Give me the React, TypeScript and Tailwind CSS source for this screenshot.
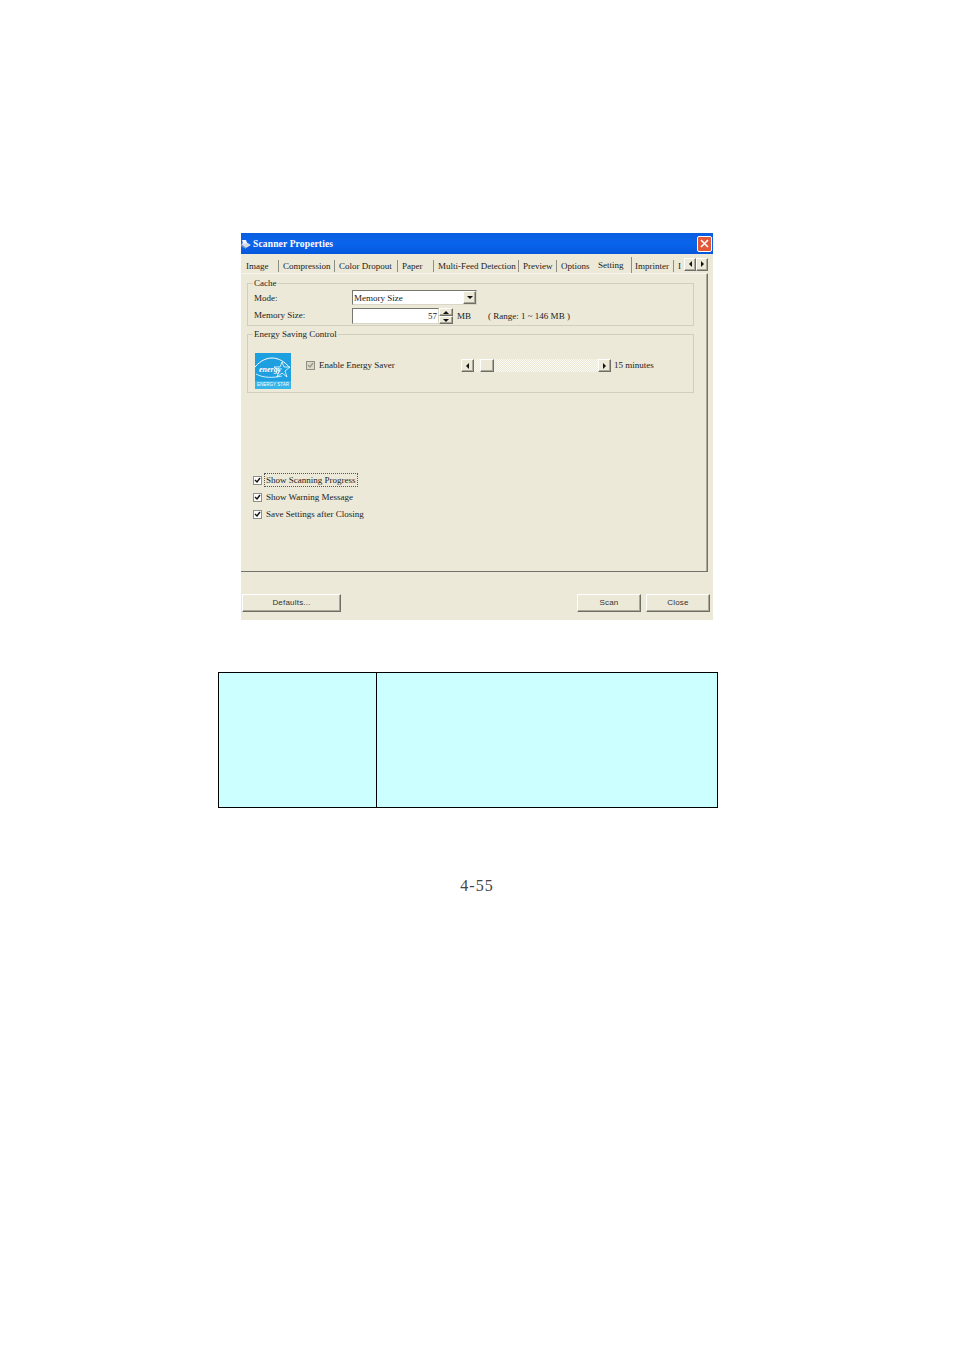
import React from 'react';

const ui = 'font-["Liberation_Serif",serif] text-[9px] leading-[12px] text-[#222] whitespace-nowrap';

function RaisedBox({ className, children }: { className: string; children?: React.ReactNode }) {
  return (
    <div className={`flex items-center justify-center bg-[#ece9d8] border border-t-white border-l-white border-r-[#6f6e64] border-b-[#6f6e64] shadow-[inset_-1px_-1px_0_#aca899] ${className}`}>
      {children}
    </div>
  );
}

function Arrow({ dir }: { dir: 'left' | 'right' | 'up' | 'down' }) {
  const pts = { left: '4,0 4,6 1,3', right: '1,0 1,6 4,3', up: '0,4 6,4 3,1', down: '0,1 6,1 3,4' }[dir];
  const box = dir === 'left' || dir === 'right' ? '0 0 5 6' : '0 0 6 5';
  const size = dir === 'left' || dir === 'right' ? 'w-[5px] h-[6px]' : 'w-[6px] h-[5px]';
  return (
    <svg viewBox={box} className={size}>
      <polygon points={pts} fill="#111" />
    </svg>
  );
}

function Check({ disabled }: { disabled?: boolean }) {
  return (
    <div className={`w-[9px] h-[9px] shrink-0 border border-[#8f8f84] ${disabled ? 'bg-[#dcd9c8]' : 'bg-white'}`}>
      <svg viewBox="0 0 7 7" className="w-[7px] h-[7px]">
        <path d="M1 3 L3 5 L6 1" fill="none" stroke={disabled ? '#9c9a8c' : '#111'} strokeWidth="1.4" />
      </svg>
    </div>
  );
}

function EnergyLogo() {
  return (
    <div className="w-[36px] h-[36px] bg-[#1d9fe0] flex flex-col">
      <svg viewBox="0 0 36 27" className="w-[36px] h-[27px]">
        <path d="M0 14 C6 7 12 5 17 5 C24 5 30 9 35 15" fill="none" stroke="#fff" strokeWidth="1" />
        <path d="M1 21 C8 25 18 25 27 23" fill="none" stroke="#fff" strokeWidth="0.8" />
        <path d="M27 9 L29 14 L35 14 L30 18 L32 24 L27 20 L22 24 L24 18 L19 14 L25 14 Z" fill="#1d9fe0" stroke="#fff" strokeWidth="0.8" />
        <text x="4" y="19" fontFamily="Liberation Serif, serif" fontStyle="italic" fontWeight="700" fontSize="8" fill="#fff">energy</text>
      </svg>
      <div className="flex-1 mt-[1px] bg-[#37b4ea] flex items-center justify-center font-['Liberation_Sans',sans-serif] text-[4.5px] leading-[6px] text-white whitespace-nowrap">
        ENERGY STAR
      </div>
    </div>
  );
}

const tabs = [
  { label: 'Image', w: 'w-[38px]', pl: 'pl-[5px]', sep: 'border-r' },
  { label: 'Compression', w: 'w-[56px]', pl: 'pl-[4px]', sep: 'border-r' },
  { label: 'Color Dropout', w: 'w-[63px]', pl: 'pl-[4px]', sep: 'border-r' },
  { label: 'Paper', w: 'w-[36px]', pl: 'pl-[4px]', sep: 'border-r' },
  { label: 'Multi-Feed Detection', w: 'w-[85px]', pl: 'pl-[4px]', sep: 'border-r' },
  { label: 'Preview', w: 'w-[38px]', pl: 'pl-[4px]', sep: 'border-r' },
  { label: 'Options', w: 'w-[35px]', pl: 'pl-[4px]', sep: '' },
];

const options = ['Show Scanning Progress', 'Show Warning Message', 'Save Settings after Closing'];

export default function App() {
  return (
    <div className="w-[954px] h-[1350px] bg-white flex flex-col overflow-hidden">
      {/* dialog screenshot */}
      <div className={`ml-[241px] mt-[233px] w-[472px] h-[387px] bg-[#ece9d8] flex flex-col ${ui}`}>
        <div className="h-[21px] shrink-0 flex items-center bg-gradient-to-b from-[#0a5ee0] via-[#0a64ec] to-[#0557dc]">
          <svg viewBox="0 0 10 10" className="w-[10px] h-[10px]">
            <path d="M0 5 L5 3 L10 6 L5 9 Z" fill="#d5dce8" />
            <path d="M0 5 L5 9 L5 10 L0 7 Z" fill="#8b9ab5" />
            <path d="M1 1 L5 1 L6 4 L2 5 Z" fill="#f2f5fa" />
          </svg>
          <span className="ml-[2px] text-white font-bold text-[9.5px] tracking-[0.15px]">Scanner Properties</span>
          <div className="ml-auto mr-[1px] w-[15px] h-[16px] flex items-center justify-center rounded-[2px] border border-white bg-[#e2593a]">
            <svg viewBox="0 0 9 9" className="w-[9px] h-[9px]">
              <path d="M1 1 L8 8 M8 1 L1 8" stroke="#fff" strokeWidth="1.6" />
            </svg>
          </div>
        </div>

        <div className="h-[19px] shrink-0 flex items-center">
          {tabs.map((t) => (
            <div key={t.label} className={`${t.w} ${t.pl} ${t.sep} h-[12px] mt-[5px] shrink-0 flex items-center border-[#8f8e82]`}>
              {t.label}
            </div>
          ))}
          <div className="w-[40px] pl-[6px] h-[16px] mt-[2px] flex items-center shrink-0 border-r border-[#8f8e82]">Setting</div>
          <div className="w-[42px] pl-[3px] h-[12px] mt-[5px] shrink-0 flex items-center border-r border-[#8f8e82]">Imprinter</div>
          <div className="w-[10px] pl-[4px] h-[12px] mt-[5px] shrink-0 flex items-center overflow-hidden">I</div>
          <RaisedBox className="w-[12px] h-[13px] mt-[1px]"><Arrow dir="left" /></RaisedBox>
          <RaisedBox className="w-[12px] h-[13px] mt-[1px]"><Arrow dir="right" /></RaisedBox>
        </div>

        <div className="w-[467px] h-[299px] shrink-0 flex flex-col border-t border-r border-b border-t-[#f7f5ec] border-r-[#74736a] border-b-[#74736a] pl-[6px] pt-[9px] shadow-[inset_-1px_0_0_#aca899]">
          <fieldset className="w-[447px] h-[43px] shrink-0 relative border border-[#d0cfbd] pl-[6px] pt-[6px]">
            <span className="absolute left-[5px] top-[-7px] bg-[#ece9d8] px-[1px]">Cache</span>
            <div className="flex items-center h-[15px]">
              <span className="w-[98px]">Mode:</span>
              <div className="w-[125px] h-[15px] flex items-center justify-between bg-white border border-t-[#77766c] border-l-[#77766c] border-r-[#d8d6c6] border-b-[#d8d6c6] pl-[1px]">
                <span>Memory Size</span>
                <RaisedBox className="w-[13px] h-[13px]"><Arrow dir="down" /></RaisedBox>
              </div>
            </div>
            <div className="flex items-center h-[16px] mt-[3px]">
              <span className="w-[98px] mt-[-2px]">Memory Size:</span>
              <div className="w-[87px] h-[16px] flex items-center justify-end bg-white border border-t-[#77766c] border-l-[#77766c] border-r-[#d8d6c6] border-b-[#d8d6c6] pr-[1px]">57</div>
              <div className="w-[14px] h-[16px] flex flex-col">
                <RaisedBox className="w-[14px] h-[8px]"><Arrow dir="up" /></RaisedBox>
                <RaisedBox className="w-[14px] h-[8px]"><Arrow dir="down" /></RaisedBox>
              </div>
              <span className="ml-[4px]">MB</span>
              <span className="ml-[17px]">( Range: 1 ~ 146 MB )</span>
            </div>
          </fieldset>

          <fieldset className="w-[447px] h-[59px] shrink-0 mt-[8px] relative border border-[#d0cfbd] pl-[7px] pt-[18px] flex items-start">
            <span className="absolute left-[5px] top-[-7px] bg-[#ece9d8] px-[1px]">Energy Saving Control</span>
            <div className="flex items-start">
              <EnergyLogo />
              <div className="ml-[15px] mt-[6px] w-[155px] flex items-center gap-[4px]">
                <Check disabled />
                <span>Enable Energy Saver</span>
              </div>
              <div className="mt-[6px] w-[150px] h-[13px] flex items-center bg-[repeating-conic-gradient(#ece9d8_0_25%,#f9f8f1_0_50%)] bg-[length:2px_2px]">
                <RaisedBox className="w-[13px] h-[13px]"><Arrow dir="left" /></RaisedBox>
                <RaisedBox className="w-[14px] h-[13px] ml-[6px]" />
                <RaisedBox className="w-[13px] h-[13px] ml-auto"><Arrow dir="right" /></RaisedBox>
              </div>
              <span className="ml-[3px] mt-[6px]">15 minutes</span>
            </div>
          </fieldset>

          <div className="flex flex-col items-start mt-[81px] ml-[6px] gap-[5px]">
            {options.map((o, i) => (
              <div key={o} className="h-[12px] flex items-center gap-[3px]">
                <Check />
                <span className={`px-[1px] ${i === 0 ? 'outline outline-1 outline-dotted outline-[#555]' : ''}`}>{o}</span>
              </div>
            ))}
          </div>
        </div>

        <div className="mt-[22px] flex items-start font-['Liberation_Sans',sans-serif] text-[8px] tracking-[0.2px] text-[#333]">
          <RaisedBox className="ml-[1px] w-[99px] h-[18px]">Defaults...</RaisedBox>
          <RaisedBox className="ml-[236px] w-[64px] h-[18px]">Scan</RaisedBox>
          <RaisedBox className="ml-[5px] w-[64px] h-[18px]">Close</RaisedBox>
        </div>
      </div>

      {/* empty table */}
      <div className="ml-[218px] mt-[52px] w-[500px] h-[136px] flex border border-black bg-[#ccffff]">
        <div className="w-[158px] border-r border-black" />
        <div className="flex-1" />
      </div>

      <div className="mt-[69px] text-center font-['Liberation_Serif',serif] text-[16px] leading-[18px] tracking-[1px] text-[#444]">4-55</div>
    </div>
  );
}
